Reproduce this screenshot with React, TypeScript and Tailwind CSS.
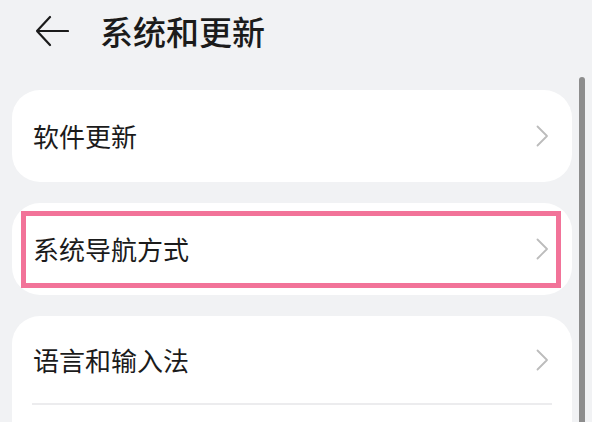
import { ReactNode } from "react";

function Chevron() {
  return (
    <svg width="13" height="22" viewBox="0 0 13 22" fill="none" className="shrink-0">
      <path d="M1.5 1.5L11 11L1.5 20.5" stroke="#bcbcbc" strokeWidth="1.8" strokeLinecap="round" strokeLinejoin="round" />
    </svg>
  );
}

function Row({ label, children }: { label: string; children?: ReactNode }) {
  return (
    <div className="relative flex items-center justify-between h-[92px] pl-[21px] pr-[23px]">
      <span className="text-[26px] leading-none text-[#1b1b1b]">{label}</span>
      <Chevron />
      {children}
    </div>
  );
}

export default function App() {
  return (
    <div
      className="relative w-[592px] h-[422px] overflow-hidden bg-[#f1f2f4]"
      style={{ fontFamily: '"Noto Sans CJK SC", "Noto Sans", sans-serif' }}
    >
      {/* header */}
      <div className="flex items-center h-[62px] pl-[35px]">
        <svg width="34" height="32" viewBox="0 0 34 32" fill="none">
          <path d="M33 16H2M15 2L2 16L15 30" stroke="#1b1b1b" strokeWidth="2.2" strokeLinecap="round" strokeLinejoin="round" />
        </svg>
        <h1 className="ml-[31px] text-[33px] leading-none font-medium text-[#1b1b1b]">系统和更新</h1>
      </div>

      {/* cards */}
      <div className="flex flex-col gap-[21px] pt-[28px] ml-[12px] mr-[20px]">
        <div className="rounded-[28px] bg-white">
          <Row label="软件更新" />
        </div>

        <div className="rounded-[28px] bg-white">
          <Row label="系统导航方式">
            <div className="absolute left-[9px] right-[11px] top-[8px] bottom-[7px] border-[5px] border-[#f27399]" />
          </Row>
        </div>

        <div className="rounded-[28px] bg-white">
          <div className="flex items-center justify-between h-[87px] pl-[21px] pr-[23px]">
            <span className="text-[26px] leading-none text-[#1b1b1b]">语言和输入法</span>
            <Chevron />
          </div>
          <div className="mx-[20px] h-[2px] bg-[#ececee]" />
          <div className="h-[80px]" />
        </div>
      </div>

      {/* scrollbar */}
      <div className="absolute left-[579px] top-[77px] w-[6px] h-[360px] rounded-full bg-[#8d8d8d]" />
    </div>
  );
}
